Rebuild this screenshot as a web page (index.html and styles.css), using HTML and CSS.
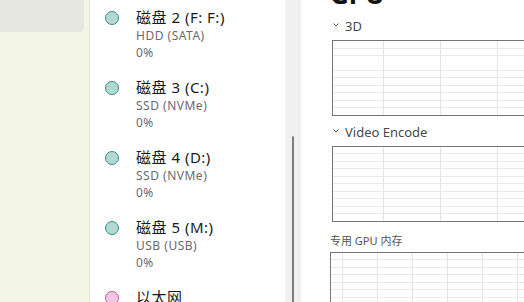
FILE: index.html
```html
<!DOCTYPE html>
<html lang="zh-CN">
<head>
<meta charset="utf-8">
<title>任务管理器 - 性能</title>
<link rel="stylesheet" href="styles.css">
</head>
<body>
<div class="app">
  <aside class="sidebar">
    <div class="sidebar-card"></div>
  </aside>

  <section class="device-list">
    <div class="device">
      <span class="dot dot-disk"></span>
      <div class="device-text">
        <div class="device-name">磁盘 2 (F: F:)</div>
        <div class="device-sub">HDD (SATA)</div>
        <div class="device-sub">0%</div>
      </div>
    </div>
    <div class="device">
      <span class="dot dot-disk"></span>
      <div class="device-text">
        <div class="device-name">磁盘 3 (C:)</div>
        <div class="device-sub">SSD (NVMe)</div>
        <div class="device-sub">0%</div>
      </div>
    </div>
    <div class="device">
      <span class="dot dot-disk"></span>
      <div class="device-text">
        <div class="device-name">磁盘 4 (D:)</div>
        <div class="device-sub">SSD (NVMe)</div>
        <div class="device-sub">0%</div>
      </div>
    </div>
    <div class="device">
      <span class="dot dot-disk"></span>
      <div class="device-text">
        <div class="device-name">磁盘 5 (M:)</div>
        <div class="device-sub">USB (USB)</div>
        <div class="device-sub">0%</div>
      </div>
    </div>
    <div class="device">
      <span class="dot dot-net"></span>
      <div class="device-text">
        <div class="device-name">以太网</div>
      </div>
    </div>
  </section>

  <div class="scrollbar"><div class="scroll-thumb"></div></div>

  <main class="detail">
    <h1 class="detail-title">GPU</h1>

    <div class="graph-header">
      <svg class="chevron" width="6" height="4" viewBox="0 0 6 4"><polyline points="0.5,0.5 3,3 5.5,0.5" fill="none" stroke="#5a5a5a" stroke-width="1"/></svg>
      <span>3D</span>
    </div>
    <div class="graph graph-wide"></div>

    <div class="graph-header graph-header-2">
      <svg class="chevron" width="6" height="4" viewBox="0 0 6 4"><polyline points="0.5,0.5 3,3 5.5,0.5" fill="none" stroke="#5a5a5a" stroke-width="1"/></svg>
      <span>Video Encode</span>
    </div>
    <div class="graph graph-wide"></div>

    <div class="graph-label">专用 GPU 内存</div>
    <div class="graph graph-mem"></div>
  </main>
</div>
</body>
</html>
```

FILE: styles.css
```css
html, body {
  margin: 0;
  padding: 0;
  width: 524px;
  height: 302px;
  overflow: hidden;
  background: #ffffff;
  font-family: "Noto Sans", "Noto Sans CJK SC", sans-serif;
}

.app {
  display: flex;
  width: 524px;
  height: 302px;
  overflow: hidden;
}

/* left navigation pane */
.sidebar {
  flex: 0 0 89px;
  background: #f3f5e6;
  border-right: 1px solid #e4e6da;
}

.sidebar-card {
  width: 84px;
  height: 32px;
  background: #e6e8e0;
  border-bottom-right-radius: 4px;
}

/* device list */
.device-list {
  flex: 0 0 195px;
  padding: 7px 0 0 15px;
  box-sizing: border-box;
  background: #ffffff;
}

.device {
  display: flex;
  align-items: flex-start;
  gap: 17px;
  height: 70px;
}

.dot {
  flex: 0 0 auto;
  width: 12px;
  height: 12px;
  margin-top: 4px;
  border-radius: 50%;
  border: 1px solid;
}

.dot-disk {
  background: #b2d8d5;
  border-color: #3e8d88;
}

.dot-net {
  background: #f4c6e6;
  border-color: #c45aa4;
}

.device-text {
  display: flex;
  flex-direction: column;
  white-space: nowrap;
}

.device-name {
  font-size: 15px;
  line-height: 20px;
  letter-spacing: 0.5px;
  color: #1a1a1a;
}

.device-sub {
  font-size: 12px;
  line-height: 17px;
  letter-spacing: 0.5px;
  color: #6b6b6b;
}

/* scrollbar */
.scrollbar {
  flex: 0 0 16px;
  background: #f0f0f0;
  display: flex;
  justify-content: center;
}

.scroll-thumb {
  width: 2px;
  margin-top: 136px;
  height: 200px;
  background: #7e7e7e;
  border-radius: 1px;
}

/* detail pane */
.detail {
  flex: 1 0 auto;
  padding-left: 29px;
  display: flex;
  flex-direction: column;
  min-width: 0;
}

.detail > * {
  flex-shrink: 0;
}

.detail-title {
  margin: -21px 0 0 0;
  font-size: 26px;
  line-height: 30px;
  font-weight: 700;
  color: #111111;
}

.graph-header {
  display: flex;
  align-items: center;
  gap: 6px;
  margin: 8px 0 0 3px;
  height: 18px;
  font-size: 13px;
  color: #4a4a4a;
}

.graph-header-2 {
  margin-top: 7px;
}

.chevron {
  display: block;
  margin-top: -2px;
}

.graph {
  box-sizing: border-box;
  width: 300px;
  border: 1px solid #767676;
  background-color: #ffffff;
}

.graph-wide {
  margin: 5px 0 0 2px;
  height: 76px;
  background-image:
    linear-gradient(to right, #e4e4e4 1px, transparent 1px),
    repeating-linear-gradient(to bottom, transparent 0, transparent 6.5px, #e9e9e9 6.5px, #e9e9e9 7.5px);
  background-size: 57px 100%, 100% 100%;
  background-position: 50px 0, 0 0;
}

.graph-label {
  margin-top: 11px;
  height: 16px;
  line-height: 16px;
  font-size: 11px;
  color: #555555;
}

.graph-mem {
  margin-top: 3px;
  height: 80px;
  background-image:
    linear-gradient(to right, #e4e4e4 1px, transparent 1px),
    repeating-linear-gradient(to bottom, transparent 0, transparent 6.5px, #e9e9e9 6.5px, #e9e9e9 7.5px);
  background-size: 35px 100%, 100% 100%;
  background-position: 11px 0, 0 0;
}
```
